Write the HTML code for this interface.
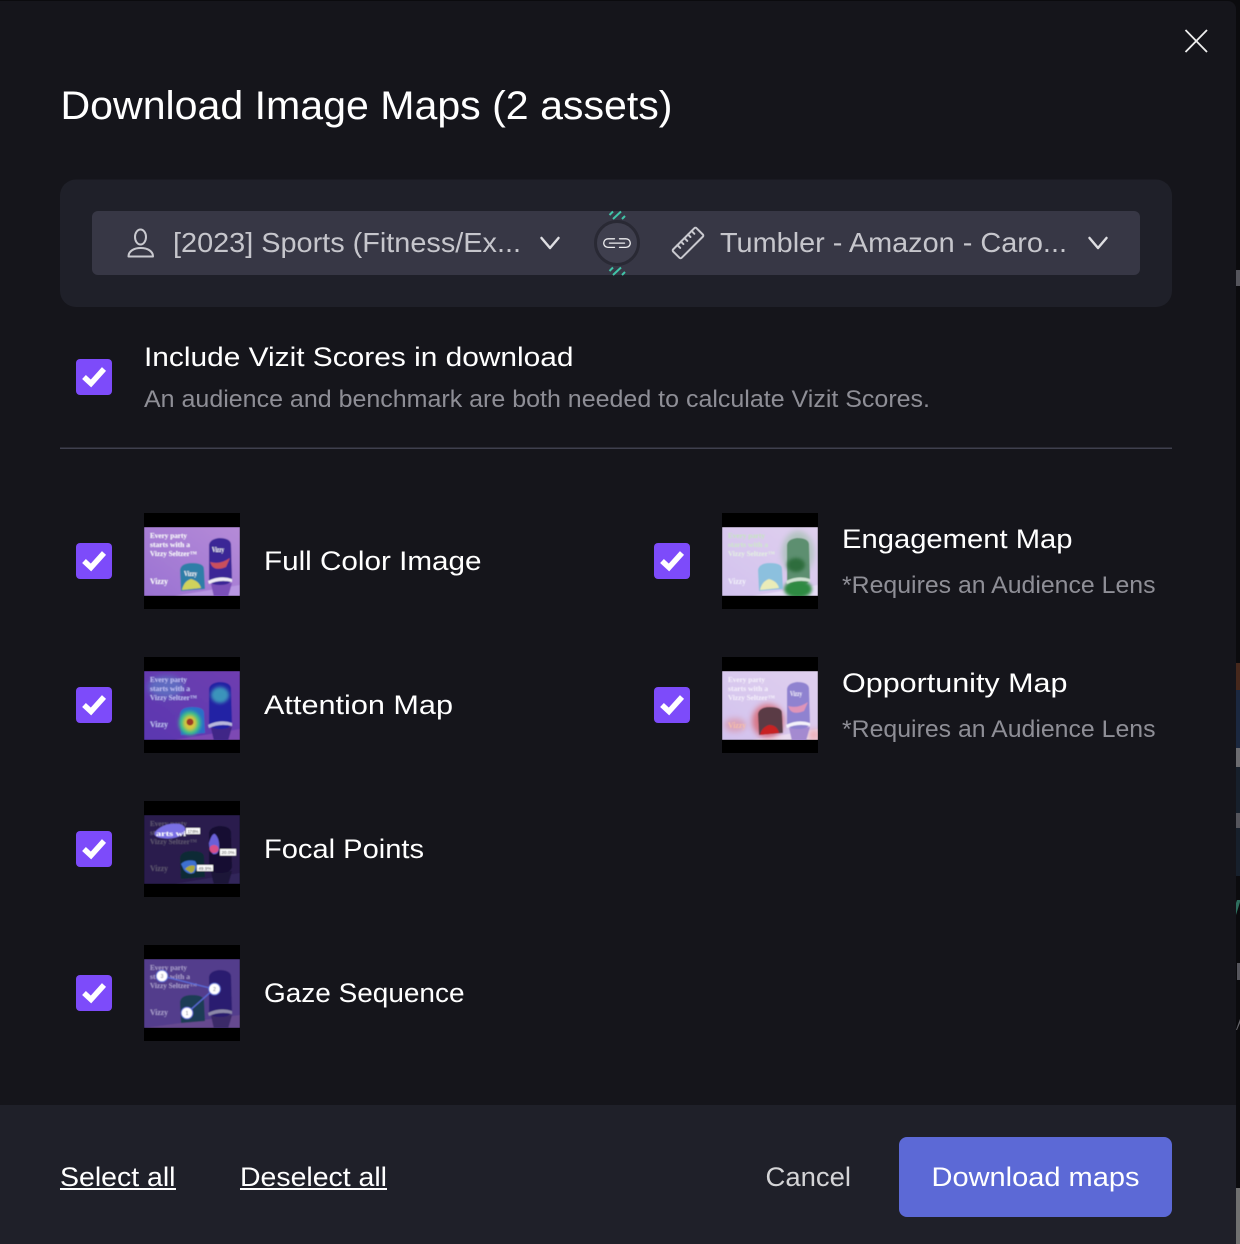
<!DOCTYPE html>
<html lang="en"><head><meta charset="utf-8"><title>Download Image Maps</title>
<style>
html,body{margin:0;padding:0;background:#0b0b0e;width:1240px;height:1244px;overflow:hidden}
svg{display:block}
text{font-family:"Liberation Sans",sans-serif}
.h{font-size:27px;fill:#fff}
.s{font-size:24px;fill:#8e8e96}
.t{font-family:"Liberation Serif",serif;font-weight:bold;font-size:7px}
.v{font-family:"Liberation Serif",serif;font-weight:bold;font-size:8.5px}
</style></head><body>
<svg width="1240" height="1244" viewBox="0 0 1240 1244" xmlns="http://www.w3.org/2000/svg">
<defs>
<filter id="b0" x="-5%" y="-5%" width="110%" height="110%"><feGaussianBlur stdDeviation=".4"/></filter>
<filter id="b3" x="-60%" y="-60%" width="220%" height="220%"><feGaussianBlur stdDeviation="3"/></filter>
<filter id="b2" x="-60%" y="-60%" width="220%" height="220%"><feGaussianBlur stdDeviation="1.500"/></filter>
<clipPath id="ci"><rect x="0" y="14" width="96" height="69"/></clipPath>
<linearGradient id="g1" x1="0" y1="1" x2="1" y2="0"><stop offset="0" stop-color="#9a72d2"/><stop offset="1" stop-color="#b58bd8"/></linearGradient>
<linearGradient id="g2" x1="0" y1="1" x2="1" y2="0"><stop offset="0" stop-color="#5a37b0"/><stop offset="1" stop-color="#6f3fb0"/></linearGradient>
<linearGradient id="g3" x1="0" y1="1" x2="1" y2="0"><stop offset="0" stop-color="#d2c2ee"/><stop offset="1" stop-color="#e0d0ee"/></linearGradient>
</defs>
<rect width="1240" height="1244" fill="#0b0b0e"/>
<!-- right-hand strip -->
<rect x="1236" y="270" width="4" height="16" fill="#55555c"/>
<rect x="1236" y="663" width="4" height="27" fill="#46281c"/>
<rect x="1236" y="690" width="4" height="58" fill="#1b2840"/>
<rect x="1236" y="748" width="4" height="19" fill="#6c6c70"/>
<rect x="1236" y="767" width="4" height="46" fill="#17202c"/>
<rect x="1236" y="813" width="4" height="15" fill="#55555c"/>
<rect x="1236" y="828" width="4" height="48" fill="#17202c"/>
<path d="M1236 915L1240 902V900H1237L1236 903Z" fill="#2e6e5e"/>
<rect x="1237" y="963" width="3" height="17" fill="#55555c"/>
<path d="M1236 1030L1240 1019V1023L1237 1030Z" fill="#66666c"/>
<rect x="1236" y="1188" width="4" height="56" fill="#707070"/>
<!-- modal -->
<path d="M0 1H1228a8 8 0 0 1 8 8V1244H0Z" fill="#15151b"/>
<path d="M0 1105H1236V1244H0Z" fill="#1f2029"/>
<path d="M1185.500 30L1207 52M1207 30L1185.500 52" stroke="#eeeeee" stroke-width="1.800" fill="none"/>
<text x="60.500" y="119" font-size="40" fill="#fff" textLength="612" lengthAdjust="spacingAndGlyphs">Download Image Maps (2 assets)</text>
<!-- selector card -->
<rect x="60" y="179.500" width="1112" height="127.500" rx="16" fill="#1f2029"/>
<rect x="92" y="211" width="1048" height="64" rx="6" fill="#373745"/>
<g fill="none" stroke="#c9c9cf" stroke-width="2" stroke-linecap="round" stroke-linejoin="round">
<ellipse cx="140.500" cy="237" rx="5.500" ry="7.500"/>
<path d="M128.500 256.500H153c0-5-5-8.500-12.250-8.500S128.500 251.500 128.500 256.500Z"/>
</g>
<text x="173" y="252" font-size="28" fill="#c6c6cc" textLength="348" lengthAdjust="spacingAndGlyphs">[2023] Sports (Fitness/Ex...</text>
<path d="M541.500 238L550 248L558.500 238" fill="none" stroke="#dedee2" stroke-width="2.500" stroke-linecap="round" stroke-linejoin="round"/>
<g stroke="#41c4a8" stroke-width="2" fill="none">
<path d="M609.500 215L613 211.500M613 219L621 211.500M622 219L625 216"/>
<path d="M609.500 271L613 267.500M613 275L621 267.500M622 275L625 272"/>
</g>
<circle cx="617" cy="243" r="21.500" fill="#3f3f4e" stroke="#292934" stroke-width="3"/>
<g fill="none" stroke="#eeeef0" stroke-width="1.300" stroke-linecap="round">
<path d="M614.500 238.800H608a4.300 4.300 0 0 0 0 8.600H614.500"/>
<path d="M619.500 238.800H626a4.300 4.300 0 0 1 0 8.600H619.500"/>
<path d="M609.500 243.100H624.500"/>
</g>
<g transform="translate(688 243) rotate(-45)" fill="none" stroke="#c9c9cf" stroke-width="2" stroke-linejoin="round" stroke-linecap="round">
<rect x="-16.500" y="-6" width="33" height="12" rx="1.500"/>
<path d="M-9 -6V-2M-4 -6V-2.500M1 -6V-2M6 -6V-2.500M11 -6V-2"/>
</g>
<text x="720" y="252" font-size="28" fill="#c6c6cc" textLength="347" lengthAdjust="spacingAndGlyphs">Tumbler - Amazon - Caro...</text>
<path d="M1089.500 238L1098 248L1106.500 238" fill="none" stroke="#dedee2" stroke-width="2.500" stroke-linecap="round" stroke-linejoin="round"/>
<!-- include row -->
<rect x="76" y="359" width="36" height="36" rx="4" fill="#7d4bfa"/>
<path d="M84 377L91 383.500L104 369" fill="none" stroke="#fff" stroke-width="5.500"/>
<text x="144" y="366" class="h" textLength="429.500" lengthAdjust="spacingAndGlyphs">Include Vizit Scores in download</text>
<text x="144" y="407" class="s" textLength="786" lengthAdjust="spacingAndGlyphs">An audience and benchmark are both needed to calculate Vizit Scores.</text>
<rect x="60" y="447.500" width="1112" height="1.500" fill="#3f404e"/>
<!-- checkboxes -->
<g fill="#7d4bfa">
<rect x="76" y="543" width="36" height="36" rx="4"/><rect x="76" y="687" width="36" height="36" rx="4"/>
<rect x="76" y="831" width="36" height="36" rx="4"/><rect x="76" y="975" width="36" height="36" rx="4"/>
<rect x="654" y="543" width="36" height="36" rx="4"/><rect x="654" y="687" width="36" height="36" rx="4"/>
</g>
<g fill="none" stroke="#fff" stroke-width="5.500">
<path d="M84 561L91 567.500L104 553"/><path d="M84 705L91 711.500L104 697"/>
<path d="M84 849L91 855.500L104 841"/><path d="M84 993L91 999.500L104 985"/>
<path d="M662 561L669 567.500L682 553"/><path d="M662 705L669 711.500L682 697"/>
</g>
<!-- Full color -->
<g transform="translate(144 513)">
<rect width="96" height="96" fill="#000"/>
<g clip-path="url(#ci)"><g filter="url(#b0)">
<rect y="14" width="96" height="69" fill="url(#g1)"/>
<path d="M30 83L96 72V83Z" fill="#b896e2"/>
<path d="M67 71L88 70L84 84H70Z" fill="#7a50b8"/>
<path d="M65 32Q66 26 75 25Q86 25 87 31L88 66Q87 72 76 72Q65 72 65 66Z" fill="#3a2796"/>
<path d="M66 49Q76 52 86 45L82 54Q72 58 68 53Z" fill="#c9505c"/>
<path d="M64 68Q76 62 88 66L88 69Q76 66 65 71Z" fill="#eeeaf4"/>
<path d="M36 57Q37 50 48 50Q60 50 60 56L61 76L37 78Z" fill="#2f7ea8"/>
<path d="M38 77Q40 68 47 66Q55 68 57 75Z" fill="#cfd25c"/>
<g fill="#fff"><text x="6" y="25" class="t" textLength="37" lengthAdjust="spacingAndGlyphs">Every party</text><text x="6" y="34" class="t" textLength="40" lengthAdjust="spacingAndGlyphs">starts with a</text><text x="6" y="43" class="t" textLength="47" lengthAdjust="spacingAndGlyphs">Vizzy Seltzer™</text><text x="6" y="71" class="v" textLength="18" lengthAdjust="spacingAndGlyphs">Vizzy</text>
<text x="68" y="39" class="t" textLength="12" lengthAdjust="spacingAndGlyphs">Vizzy</text><text x="40" y="63" class="t" textLength="13" lengthAdjust="spacingAndGlyphs">Vizzy</text></g>
</g></g></g>
<text x="264" y="570" class="h" textLength="217.500" lengthAdjust="spacingAndGlyphs">Full Color Image</text>
<!-- Attention -->
<g transform="translate(144 657)">
<rect width="96" height="96" fill="#000"/>
<g clip-path="url(#ci)"><g filter="url(#b0)">
<rect y="14" width="96" height="69" fill="url(#g2)"/>
<path d="M30 83L96 72V83Z" fill="#7d48b4"/>
<path d="M67 71L88 70L84 84H70Z" fill="#3f2787"/>
<ellipse cx="22" cy="30" rx="18" ry="11" fill="#5a9ad0" opacity=".5" filter="url(#b3)"/>
<path d="M65 32Q66 26 75 25Q86 25 87 31L88 66Q87 72 76 72Q65 72 65 66Z" fill="#2424a4"/>
<ellipse cx="76" cy="38" rx="9" ry="8" fill="#3fa8c0" opacity=".85" filter="url(#b2)"/>
<path d="M64 68Q76 62 88 66L88 69Q76 66 65 71Z" fill="#b8b8dc"/>
<path d="M36 57Q37 50 48 50Q60 50 60 56L61 76L37 78Z" fill="#2a6ec8"/>
<ellipse cx="46" cy="66" rx="11" ry="12" fill="#37c08c" filter="url(#b2)"/>
<ellipse cx="46" cy="66" rx="7" ry="8" fill="#d9c63c" filter="url(#b2)"/>
<ellipse cx="46" cy="65" rx="3.500" ry="3.500" fill="#9c3a28"/>
<g fill="#c0c0f4"><text x="6" y="25" class="t" textLength="37" lengthAdjust="spacingAndGlyphs">Every party</text><text x="6" y="34" class="t" textLength="40" lengthAdjust="spacingAndGlyphs">starts with a</text><text x="6" y="43" class="t" textLength="47" lengthAdjust="spacingAndGlyphs">Vizzy Seltzer™</text><text x="6" y="70" class="v" textLength="18" lengthAdjust="spacingAndGlyphs">Vizzy</text></g>
</g></g></g>
<text x="264" y="714" class="h" textLength="189" lengthAdjust="spacingAndGlyphs">Attention Map</text>
<!-- Focal -->
<g transform="translate(144 801)">
<rect width="96" height="96" fill="#000"/>
<g clip-path="url(#ci)"><g filter="url(#b0)">
<rect y="14" width="96" height="69" fill="#2a1f4e"/>
<path d="M30 83L96 72V83Z" fill="#33255a"/>
<path d="M67 71L88 70L84 84H70Z" fill="#1c1438"/>
<g fill="#5f5670"><text x="6" y="25" class="t" textLength="37" lengthAdjust="spacingAndGlyphs">Every party</text><text x="6" y="34" class="t" textLength="40" lengthAdjust="spacingAndGlyphs">starts with a</text><text x="6" y="43" class="t" textLength="47" lengthAdjust="spacingAndGlyphs">Vizzy Seltzer™</text><text x="6" y="70" class="v" textLength="18" lengthAdjust="spacingAndGlyphs">Vizzy</text></g>
<path d="M65 32Q66 26 75 25Q86 25 87 31L88 66Q87 72 76 72Q65 72 65 66Z" fill="#141030"/>
<path d="M65 42Q68 32 71 33Q76 38 75 48Q74 54 69 53Q65 50 65 42Z" fill="#6a60d8"/>
<ellipse cx="70" cy="48" rx="4.500" ry="4" fill="#d84f88"/>
<path d="M36 57Q37 50 48 50Q60 50 60 56L61 76L37 78Z" fill="#0e2a34"/>
<path d="M37 63Q42 58 51 60Q55 65 50 72Q44 74 40 69Z" fill="#3d6fd0"/>
<path d="M41 68Q46 63 51 65Q51 71 47 72Z" fill="#aaa83a"/>
<path d="M11 31Q20 21 36 23Q44 26 40 33Q30 39 18 37Q9 36 11 31Z" fill="#7a70e4"/>
<text x="12" y="35" class="t" fill="#fff" textLength="30" lengthAdjust="spacingAndGlyphs">arts wi</text>
<rect x="42" y="27" width="14" height="6" fill="#fff"/>
<rect x="76" y="48" width="16" height="6.500" fill="#fff"/>
<rect x="53" y="64" width="16" height="6" fill="#fff"/>
<g fill="#333" font-size="4.500"><text x="43.500" y="32" textLength="11">17.6%</text><text x="77.500" y="53" textLength="13">20.0%</text><text x="54.500" y="69" textLength="13">49.9%</text></g>
</g></g></g>
<text x="264" y="858" class="h" textLength="160" lengthAdjust="spacingAndGlyphs">Focal Points</text>
<!-- Gaze -->
<g transform="translate(144 945)">
<rect width="96" height="96" fill="#000"/>
<g clip-path="url(#ci)"><g filter="url(#b0)">
<rect y="14" width="96" height="69" fill="#533e8c"/>
<path d="M0 83L96 70V83Z" fill="#66498f"/>
<path d="M67 71L88 70L84 84H70Z" fill="#3a2a68"/>
<g fill="#a99ccc"><text x="6" y="25" class="t" textLength="37" lengthAdjust="spacingAndGlyphs">Every party</text><text x="6" y="34" class="t" textLength="40" lengthAdjust="spacingAndGlyphs">starts with a</text><text x="6" y="43" class="t" textLength="47" lengthAdjust="spacingAndGlyphs">Vizzy Seltzer™</text><text x="6" y="70" class="v" textLength="18" lengthAdjust="spacingAndGlyphs">Vizzy</text></g>
<path d="M65 32Q66 26 75 25Q86 25 87 31L88 66Q87 72 76 72Q65 72 65 66Z" fill="#2c1f70"/>
<path d="M64 68Q76 62 88 66L88 69Q76 66 65 71Z" fill="#8c88a8"/>
<path d="M36 57Q37 50 48 50Q60 50 60 56L61 76L37 78Z" fill="#1c3c54"/>
<path d="M18 31L70 44L43 68" fill="none" stroke="#5a6ad8" stroke-width="1.200"/>
<g fill="#fff" stroke="#5a6ad8" stroke-width="1"><circle cx="18" cy="31" r="5.800"/><circle cx="70.500" cy="44" r="5.800"/><circle cx="43" cy="68" r="5.800"/></g>
<g font-size="5" fill="#667" text-anchor="middle"><text x="18" y="33">3</text><text x="70.500" y="46">2</text><text x="43" y="70">1</text></g>
</g></g></g>
<text x="264" y="1002" class="h" textLength="200.500" lengthAdjust="spacingAndGlyphs">Gaze Sequence</text>
<!-- Engagement -->
<g transform="translate(722 513)">
<rect width="96" height="96" fill="#000"/>
<g clip-path="url(#ci)"><g filter="url(#b0)">
<rect y="14" width="96" height="69" fill="url(#g3)"/>
<path d="M30 83L96 72V83Z" fill="#e6dcf6"/>
<ellipse cx="76" cy="40" rx="16" ry="22" fill="#90bc9c" opacity=".55" filter="url(#b3)"/>
<path d="M65 32Q66 26 75 25Q86 25 87 31L88 66Q87 72 76 72Q65 72 65 66Z" fill="#5d8f70"/>
<ellipse cx="74" cy="52" rx="9" ry="7" fill="#2d6d3c" filter="url(#b2)"/>
<ellipse cx="76" cy="76" rx="14" ry="9" fill="#2f8a42" filter="url(#b2)"/>
<path d="M64 68Q76 62 88 66L88 69Q76 66 65 71Z" fill="#cfe2d2"/>
<path d="M36 57Q37 50 48 50Q60 50 60 56L61 76L37 78Z" fill="#8cc0de"/>
<path d="M38 77Q40 68 47 66Q55 68 57 75Z" fill="#eaecb8"/>
<g fill="#f3f3fb"><text x="6" y="25" class="t" textLength="37" lengthAdjust="spacingAndGlyphs" fill="#c4e6bc">Every party</text><text x="6" y="34" class="t" textLength="40" lengthAdjust="spacingAndGlyphs" fill="#cce9c6">starts with a</text><text x="6" y="43" class="t" textLength="47" lengthAdjust="spacingAndGlyphs" fill="#e4f2e0">Vizzy Seltzer™</text><text x="6" y="71" class="v" textLength="18" lengthAdjust="spacingAndGlyphs">Vizzy</text></g>
</g></g></g>
<text x="842" y="548" class="h" textLength="230.500" lengthAdjust="spacingAndGlyphs">Engagement Map</text>
<text x="842" y="593" class="s" textLength="313.500" lengthAdjust="spacingAndGlyphs">*Requires an Audience Lens</text>
<!-- Opportunity -->
<g transform="translate(722 657)">
<rect width="96" height="96" fill="#000"/>
<g clip-path="url(#ci)"><g filter="url(#b0)">
<rect y="14" width="96" height="69" fill="url(#g3)"/>
<path d="M30 83L96 72V83Z" fill="#eadcf0"/>
<ellipse cx="46" cy="64" rx="16" ry="17" fill="#d84040" opacity=".6" filter="url(#b3)"/>
<ellipse cx="13" cy="68" rx="11" ry="7" fill="#e07070" opacity=".4" filter="url(#b3)"/>
<ellipse cx="92" cy="78" rx="6" ry="6" fill="#e88" opacity=".5" filter="url(#b3)"/>
<path d="M67 71L88 70L84 84H70Z" fill="#a48ad0"/>
<path d="M65 32Q66 26 75 25Q86 25 87 31L88 66Q87 72 76 72Q65 72 65 66Z" fill="#8f82d0"/>
<path d="M66 49Q76 52 86 45L82 54Q72 58 68 53Z" fill="#df94b8"/>
<path d="M64 68Q76 62 88 66L88 69Q76 66 65 71Z" fill="#f4f2fa"/>
<path d="M36 57Q37 50 48 50Q60 50 60 56L61 76L37 78Z" fill="#5a3a44"/>
<path d="M38 78Q40 70 47 68Q55 68 57 76Z" fill="#c82020"/>
<g fill="#f6f2fc"><text x="6" y="25" class="t" textLength="37" lengthAdjust="spacingAndGlyphs">Every party</text><text x="6" y="34" class="t" textLength="40" lengthAdjust="spacingAndGlyphs">starts with a</text><text x="6" y="43" class="t" textLength="47" lengthAdjust="spacingAndGlyphs">Vizzy Seltzer™</text><text x="6" y="71" class="v" textLength="18" lengthAdjust="spacingAndGlyphs" fill="#f6c0a8">Vizzy</text>
<text x="68" y="39" class="t" textLength="12" lengthAdjust="spacingAndGlyphs">Vizzy</text></g>
</g></g></g>
<text x="842" y="692" class="h" textLength="225.500" lengthAdjust="spacingAndGlyphs">Opportunity Map</text>
<text x="842" y="737" class="s" textLength="313.500" lengthAdjust="spacingAndGlyphs">*Requires an Audience Lens</text>
<!-- footer -->
<text x="60" y="1186" class="h" textLength="115.500" lengthAdjust="spacingAndGlyphs">Select all</text>
<rect x="60" y="1188" width="116" height="2" fill="#fff"/>
<text x="240" y="1186" class="h" textLength="147" lengthAdjust="spacingAndGlyphs">Deselect all</text>
<rect x="240" y="1188" width="147" height="2" fill="#fff"/>
<text x="765.500" y="1186" class="h" style="fill:#d4d4d6" textLength="85.500" lengthAdjust="spacingAndGlyphs">Cancel</text>
<rect x="899" y="1137" width="273" height="80" rx="8" fill="#5c69d6"/>
<text x="931.500" y="1186" class="h" textLength="208" lengthAdjust="spacingAndGlyphs">Download maps</text>
</svg>
</body></html>
